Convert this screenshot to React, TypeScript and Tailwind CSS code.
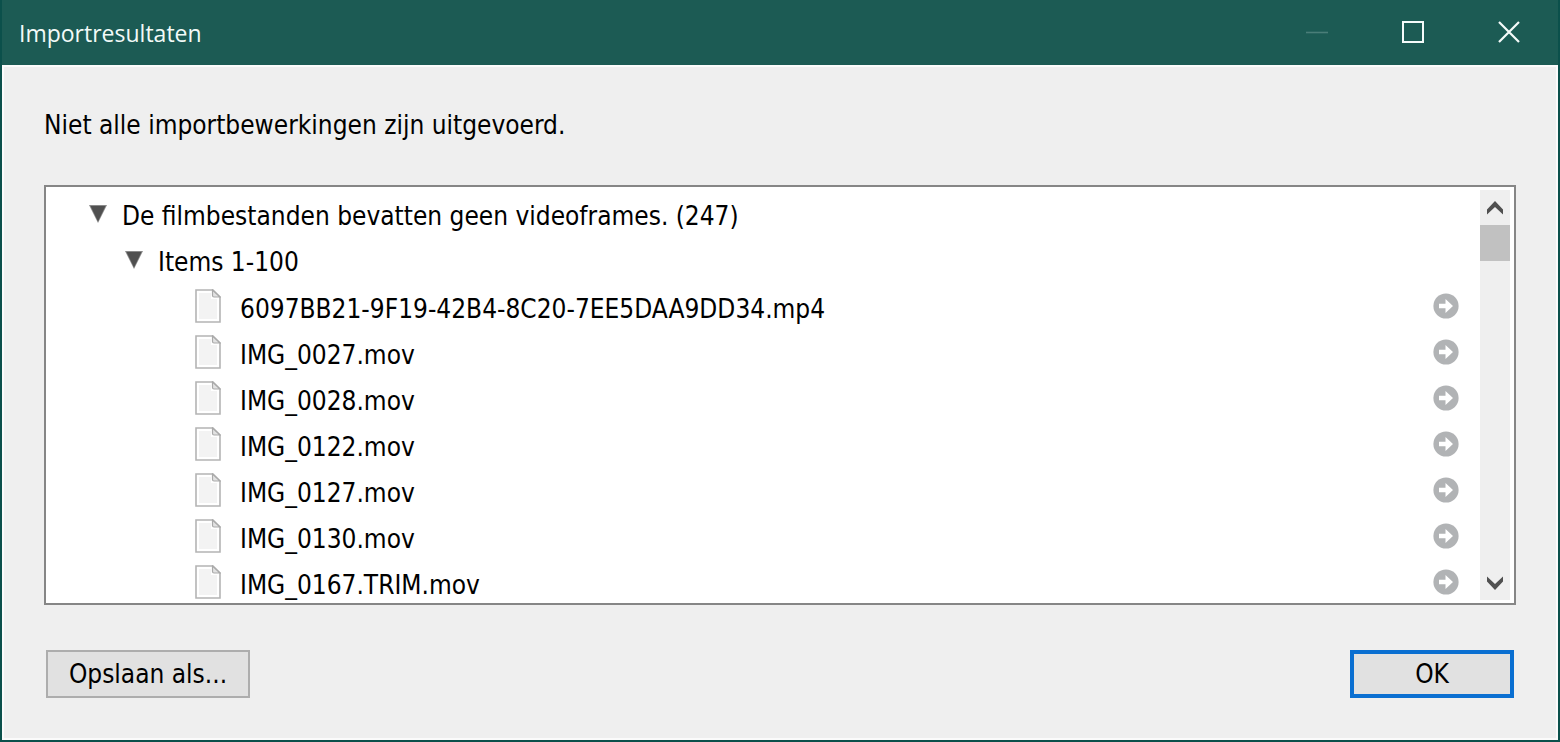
import { useState } from "react";

const files = [
  "6097BB21-9F19-42B4-8C20-7EE5DAA9DD34.mp4",
  "IMG_0027.mov",
  "IMG_0028.mov",
  "IMG_0122.mov",
  "IMG_0127.mov",
  "IMG_0130.mov",
  "IMG_0167.TRIM.mov",
];

function Triangle({ open }: { open: boolean }) {
  return (
    <svg width="18" height="18" viewBox="0 0 18 18" className={open ? "" : "-rotate-90"} aria-hidden="true">
      <path d="M0 0H18L9 18Z" fill="#8a8a8a" />
      <path d="M1.5 1H16.5L9 16.5Z" fill="#505050" />
    </svg>
  );
}

function FileIcon() {
  return (
    <svg width="26" height="34" viewBox="0 0 26 34" className="shrink-0" aria-hidden="true">
      <path d="M1 1H18L25 8V33H1Z" fill="#fff" stroke="#b4b4b4" strokeWidth="1.6" />
      <path d="M4 4H16V10H22V30H4Z" fill="#f3f3f3" />
      <path d="M17.5 1V6.5Q17.5 8 19 8H25Z" fill="#e2e2e2" stroke="#a9a9a9" strokeWidth="1.2" />
    </svg>
  );
}

function RevealIcon() {
  return (
    <svg width="26" height="26" viewBox="0 0 26 26" aria-hidden="true">
      <circle cx="13" cy="13" r="12.6" fill="#b1b3b5" />
      <path d="M6 10.8H12.5V6L20 13L12.5 20V15.2H6Z" fill="#fff" />
    </svg>
  );
}

function Node({ label, className, children }: { label: string; className: string; children: React.ReactNode }) {
  const [open, setOpen] = useState(true);
  return (
    <li>
      <div className={className}>
        <button type="button" aria-label={label} aria-expanded={open} onClick={() => setOpen(!open)}>
          <Triangle open={open} />
        </button>
        <span className="pt-1">{label}</span>
      </div>
      {open && children}
    </li>
  );
}

export default function App() {
  return (
    <div className="flex min-h-screen flex-col border-2 border-t-0 border-[#0b504b] bg-[#efefef] font-['DejaVu_Sans_Condensed','DejaVu_Sans',sans-serif] text-[26px] leading-8 text-black">
      <header className="flex h-[65px] items-center justify-between bg-[#1c5b54] text-white">
        <h1 className="pl-[17px] font-['Open_Sans',sans-serif] text-[23px] text-[#f2faf8]">Importresultaten</h1>
        <div className="flex h-full items-center pr-px pb-0.5">
          <button type="button" aria-label="Minimaliseren" disabled className="flex h-full w-24 items-center justify-center">
            <svg width="22" height="22" viewBox="0 0 22 22">
              <path d="M0 11.5H22" stroke="#4a7e78" strokeWidth="1.6" />
            </svg>
          </button>
          <button type="button" aria-label="Maximaliseren" className="flex h-full w-24 items-center justify-center">
            <svg width="22" height="22" viewBox="0 0 22 22" fill="none">
              <path d="M1 1H21V21H1Z" stroke="#f5fbfa" strokeWidth="2" />
            </svg>
          </button>
          <button type="button" aria-label="Sluiten" className="flex h-full w-24 items-center justify-center">
            <svg width="22" height="22" viewBox="0 0 22 22">
              <path d="M1 1L21 21M21 1L1 21" stroke="#f5fbfa" strokeWidth="2.2" />
            </svg>
          </button>
        </div>
      </header>
      <main className="flex grow flex-col border-2 border-[#fbfbfb] px-10 pt-[42px] pb-10">
        <p>Niet alle importbewerkingen zijn uitgevoerd.</p>
        <section aria-label="Resultaten" className="mt-11 flex h-[420px] border-2 border-[#868686] bg-white">
          <ul className="grow overflow-hidden pt-1">
            <Node label="De filmbestanden bevatten geen videoframes. (247)" className="flex h-[46px] items-center gap-[15px] pl-[43px]">
              <ul>
                <Node label="Items 1-100" className="flex h-[46px] items-center gap-[15px] pl-[79px]">
                  <ul>
                    {files.map((name) => (
                      <li key={name} className="flex h-[46px] items-center pr-[21px] pl-[149px]">
                        <FileIcon />
                        <span className="grow pt-1.5 pl-[19px]">{name}</span>
                        <button type="button" aria-label={`Toon ${name}`}>
                          <RevealIcon />
                        </button>
                      </li>
                    ))}
                  </ul>
                </Node>
              </ul>
            </Node>
          </ul>
          <div className="my-[3px] mr-1 flex w-[30px] flex-col bg-[#efefef]">
            <button type="button" aria-label="Omhoog" className="flex h-[35px] items-center justify-center">
              <svg width="16" height="14" viewBox="0 0 16 14">
                <path d="M0 8.5L8 0L16 8.5V13.5L8 6L0 13.5Z" fill="#505050" />
              </svg>
            </button>
            <div className="h-9 bg-[#c1c1c1]" />
            <button type="button" aria-label="Omlaag" className="mt-auto flex h-[35px] items-center justify-center">
              <svg width="16" height="14" viewBox="0 0 16 14">
                <path d="M0 5.5L8 14L16 5.5V0.5L8 8L0 0.5Z" fill="#505050" />
              </svg>
            </button>
          </div>
        </section>
        <footer className="mt-[45px] flex items-center justify-between px-0.5">
          <button type="button" className="h-12 w-[204px] border-2 border-[#adadad] bg-[#e1e1e1]">Opslaan als...</button>
          <button type="button" className="h-12 w-[164px] border-4 border-[#0a6fd1] bg-[#e1e1e1]">OK</button>
        </footer>
      </main>
    </div>
  );
}
